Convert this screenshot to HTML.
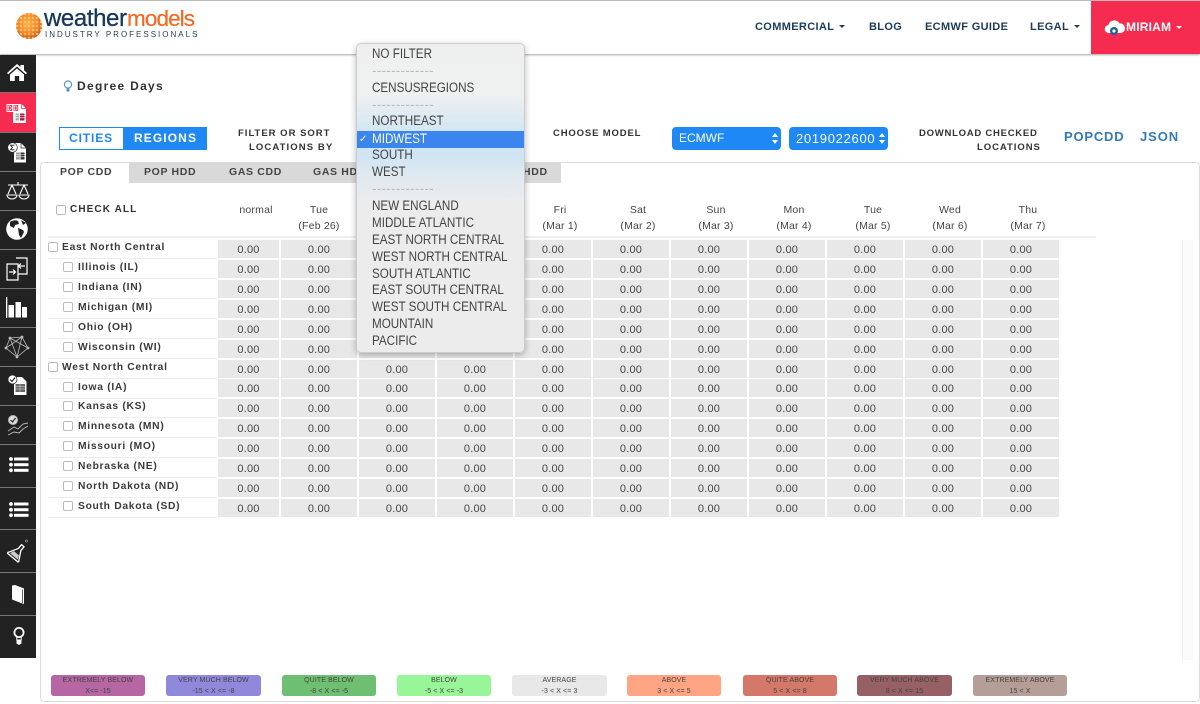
<!DOCTYPE html>
<html><head><meta charset="utf-8"><title>Degree Days</title>
<style>
html,body{margin:0;padding:0;background:#fff}
body{position:relative;width:1200px;height:704px;overflow:hidden;font-family:"Liberation Sans",sans-serif;color:#333;filter:blur(.3px)}
.a{position:absolute}
.t{position:absolute;white-space:nowrap}
.b{font-weight:bold;letter-spacing:.7px;font-size:10px;color:#333;line-height:14px}
.nav{font-weight:bold;font-size:11px;letter-spacing:.35px;color:#1d3c5c;line-height:14px;top:20px}
.caret{display:inline-block;width:0;height:0;border-left:3px solid transparent;border-right:3px solid transparent;border-top:3px solid currentColor;vertical-align:2px;margin-left:2px}
.side{position:absolute;left:0;width:36px;background:#222}
.sep{position:absolute;left:0;width:36px;height:1px;background:#777}
.tab{position:absolute;top:165px;font-weight:bold;font-size:10.5px;letter-spacing:.65px;color:#444;line-height:14px;white-space:nowrap}
.hd{position:absolute;top:202px;text-align:center;font-size:10.5px;line-height:16px;color:#444;width:80px;letter-spacing:.2px}
.r{position:absolute;left:0;height:18px;width:1100px}
.r span{position:absolute;top:0;height:18px;background:#e8e8e8;text-align:center;font-size:11px;line-height:20px;color:#444;letter-spacing:.2px}
.r span:nth-child(1){left:218px;width:61px}
.r span:nth-child(2){left:281px;width:76px}
.r span:nth-child(3){left:359px;width:76px}
.r span:nth-child(4){left:437px;width:76px}
.r span:nth-child(5){left:515px;width:76px}
.r span:nth-child(6){left:593px;width:76px}
.r span:nth-child(7){left:671px;width:76px}
.r span:nth-child(8){left:749px;width:76px}
.r span:nth-child(9){left:827px;width:76px}
.r span:nth-child(10){left:905px;width:76px}
.r span:nth-child(11){left:983px;width:76px}
.l{position:absolute;left:48px;width:168px;height:18px;border-bottom:1px solid #eee}
.l i{position:absolute;width:8px;height:8px;border:1px solid #bbb;border-radius:2px;background:#fff;top:2px}
.l b{position:absolute;top:1px;font-size:10.3px;letter-spacing:.7px;line-height:14px;color:#3a3a3a;white-space:nowrap}
.p i{left:0}.p b{left:14px}
.k i{left:15px}.k b{left:30px}
.dd{position:absolute;left:356px;top:43px;width:169px;height:310px;border-radius:5px;border:1px solid #ccc;box-shadow:0 2px 7px rgba(0,0,0,.28);z-index:5;background:linear-gradient(#efefef 0,#eff0f0 50px,#d9e9f3 78px,#cfe5f3 92px,#cfe5f3 112px,#dfe9f0 130px,#ececec 160px,#ececec 100%);font-size:13.4px;color:#444;box-sizing:border-box}
.dd div{position:absolute;left:15px;height:17px;line-height:17px;white-space:nowrap;transform:scaleX(.87);transform-origin:0 0}
.dd .s{color:#bbb;letter-spacing:.3px;transform:none}
.lg{position:absolute;top:675px;height:20px;padding-top:1px;border-radius:3px;text-align:center;font-size:7px;line-height:10.5px;color:#444;letter-spacing:.1px}
.sel{position:absolute;top:127px;height:23px;background:#1e88f5;border-radius:4px;color:#fff;font-size:13px;line-height:23px;letter-spacing:.7px}
.ar{position:absolute;top:6px;width:0;height:0;border-left:3px solid transparent;border-right:3px solid transparent}
</style></head><body>

<!-- header -->
<div class="a" style="left:0;top:0;width:1200px;height:54px;background:#fff;border-top:1px solid #bbb;box-sizing:border-box;box-shadow:0 1px 2px rgba(0,0,0,.35)"></div>
<svg class="a" style="left:15px;top:12px" width="28" height="28" viewBox="0 0 28 28">
<defs><radialGradient id="g" cx=".45" cy=".4" r=".65"><stop offset="0" stop-color="#ffb347"/><stop offset=".6" stop-color="#f58a2a"/><stop offset="1" stop-color="#c9541a"/></radialGradient>
<pattern id="h" width="4" height="4" patternUnits="userSpaceOnUse"><circle cx="2" cy="2" r="1.1" fill="#ffd38a" opacity=".8"/></pattern></defs>
<circle cx="14" cy="14" r="13" fill="url(#g)"/><circle cx="14" cy="14" r="13" fill="url(#h)"/>
</svg>
<div class="t" style="left:44px;top:5px;font-size:24px;line-height:28px;letter-spacing:-.4px;color:#16365a;-webkit-text-stroke:.3px #16365a">weather</div>
<div class="t" style="left:127px;top:5px;font-size:22.5px;line-height:28px;letter-spacing:-.9px;color:#f26a21;-webkit-text-stroke:.2px #f26a21">models</div>
<div class="t" style="left:45px;top:30px;font-size:8px;line-height:10px;letter-spacing:2px;color:#1e3d5e">INDUSTRY PROFESSIONALS</div>

<div class="t nav" style="left:755px">COMMERCIAL <span class="caret"></span></div>
<div class="t nav" style="left:869px">BLOG</div>
<div class="t nav" style="left:925px">ECMWF GUIDE</div>
<div class="t nav" style="left:1030px">LEGAL <span class="caret"></span></div>
<div class="a" style="left:1091px;top:1px;width:109px;height:53px;background:#f52b4f"></div>
<svg class="a" style="left:1104px;top:18px" width="22" height="18" viewBox="0 0 22 18"><path d="M5 15a4 4 0 0 1-.6-8A6 6 0 0 1 15.500 5.500 4.800 4.800 0 0 1 17 15z" fill="#fff"/><circle cx="10" cy="13" r="4" fill="#1f5f96"/><circle cx="10" cy="13" r="1.600" fill="#fff"/></svg>
<div class="t nav" style="left:1126px;color:#fff;font-size:12px;letter-spacing:.2px">MIRIAM <span class="caret" style="margin-left:1px"></span></div>

<!-- sidebar -->
<div class="side" style="top:55px;height:603px"></div>
<div class="a" style="left:0;top:93px;width:36px;height:39px;background:#f52b4f"></div>
<div class="sep" style="top:92px"></div><div class="sep" style="top:132px"></div><div class="sep" style="top:171px"></div><div class="sep" style="top:210px"></div><div class="sep" style="top:249px"></div><div class="sep" style="top:288px"></div><div class="sep" style="top:327px"></div><div class="sep" style="top:366px"></div><div class="sep" style="top:405px"></div><div class="sep" style="top:444px"></div><div class="sep" style="top:487px"></div><div class="sep" style="top:529px"></div><div class="sep" style="top:572px"></div><div class="sep" style="top:615px"></div>

<svg class="a" style="left:0;top:55px" width="36" height="603" viewBox="0 0 36 603" fill="none">
<!-- home -->
<path d="M7 18 17 9l3.500 3v-2H24v5.200l3 2.800-1.200 1.300L17 11.500 8.200 19.300z" fill="#fff"/><path d="M10 19.500 17 13.500l7 6V26h-4.800v-5h-4.400v5H10z" fill="#fff"/>
<!-- DD doc -->
<g transform="translate(0,39)">
<path d="M19 10h2.500l4.500 4.500V29H13V18h6z" fill="#fff"/><path d="M21.500 10v4.500H26" stroke="#f52b4f" stroke-width=".7"/>
<rect x="7" y="10.500" width="5.600" height="7" stroke="#fff" stroke-width="1"/><rect x="13" y="10.500" width="5.600" height="7" stroke="#fff" stroke-width="1"/>
<path d="M8.500 12v4h1.500l1-1v-2l-1-1zM14.500 12v4H16l1-1v-2l-1-1z" stroke="#fff" stroke-width=".7"/>
<path d="M15.500 19.500h3.500v7h-3.500z" fill="#aaa"/><path d="M20 19.500h4.500v7H20z" fill="#a51d38"/><path d="M15.500 21.500h9M15.500 23.800h9" stroke="#fff" stroke-width=".6"/>
</g>
<!-- sum doc -->
<g transform="translate(0,78)">
<path d="M15 10h6l5 5v14.500H14V17z" fill="#fff"/><path d="M21 10v5h5" stroke="#222" stroke-width=".7"/><circle cx="12.500" cy="14.500" r="4.800" fill="#fff" stroke="#222" stroke-width=".7"/><path d="M14.500 12.200h-4l2 2.300-2 2.300h4" stroke="#222" stroke-width=".9"/>
<path d="M16 19.500h3.800v7H16z" fill="#999"/><path d="M20.500 19.500h4v7h-4z" fill="#333"/><path d="M16 21.500h8.500M16 23.800h8.500" stroke="#fff" stroke-width=".6"/>
</g>
<!-- scales -->
<g transform="translate(0,117)" stroke="#fff" stroke-width="1.100">
<path d="M8 13h20M18 10v3M12 13 8 22M12 13l4 9M24 13l-4 9M24 13l4 9"/><path d="M7 23h10a5 4 0 0 1-10 0zM19 23h10a5 4 0 0 1-10 0z"/>
</g>
<!-- globe -->
<g transform="translate(0,156)">
<circle cx="17" cy="18" r="10.800" fill="#fff"/><path d="M10 11c3-2 6-2 8-1l1 3-4 1-1 3-4-2zM18 17l5 2 1 2-3 6-2-3zM21 9l5 3-3 2z" fill="#222"/>
</g>
<!-- arrows -->
<g transform="translate(0,195)" stroke="#fff" stroke-width="1.200">
<path d="M7 14h11v16H7zM16 8h11v16h-9"/><path d="M9 22h6m-2-2.500 2.500 2.500-2.500 2.500M25 16h-6m2-2.500L18.500 16l2.500 2.500"/>
</g>
<!-- bars -->
<g transform="translate(0,234)" fill="#fff">
<rect x="6" y="8" width="1.300" height="21"/><rect x="8.500" y="16" width="5.500" height="12.500"/><rect x="15.500" y="13" width="5.500" height="15.500"/><rect x="22" y="18" width="5" height="10.500"/>
</g>
<!-- network -->
<g transform="translate(0,273)" stroke="#bbb" stroke-width=".8">
<path d="M10 10 22 9 28 20 17 29 6 20zM10 10 17 29M22 9 17 29M6 20 22 9M28 20 10 10"/><g fill="#bbb"><circle cx="10" cy="10" r="1"/><circle cx="22" cy="9" r="1"/><circle cx="28" cy="20" r="1"/><circle cx="17" cy="29" r="1"/><circle cx="6" cy="20" r="1"/></g>
</g>
<!-- check doc -->
<g transform="translate(0,312)">
<path d="M15 10h7l4.500 4.500V28H14V16z" fill="#fff"/><circle cx="12.500" cy="12.500" r="4.500" fill="#fff" stroke="#222" stroke-width=".7"/><path d="m10 12.500 2 2 3-4" stroke="#222" stroke-width="1.100"/><path d="M15.500 17h9.500v8h-9.500z" fill="#666"/><path d="M15.500 19.500h9.500M15.500 22h9.500M20 17v8" stroke="#ddd" stroke-width=".5"/>
</g>
<!-- chart check -->
<g transform="translate(0,351)" stroke="#bbb" stroke-width=".9">
<circle cx="13" cy="14" r="4.500" fill="#ddd"/><path d="m10.500 14 2 2 3-4" stroke="#222" stroke-width="1.100"/><path d="M8 25l6-4 4 2 5-5 5-1M8 29l6-3 5 1 4-4 5-3"/>
</g>
<!-- lists -->
<g transform="translate(0,390)" fill="#fff">
<circle cx="11" cy="14" r="1.900"/><circle cx="11" cy="19.700" r="1.900"/><circle cx="11" cy="25.300" r="1.900"/><rect x="14" y="12.500" width="14.500" height="3"/><rect x="14" y="18.200" width="14.500" height="3"/><rect x="14" y="23.800" width="14.500" height="3"/>
</g>
<g transform="translate(0,436)" fill="#fff">
<circle cx="11" cy="13" r="1.900"/><circle cx="11" cy="18.700" r="1.900"/><circle cx="11" cy="24.300" r="1.900"/><rect x="14" y="11.500" width="14.500" height="3"/><rect x="14" y="17.200" width="14.500" height="3"/><rect x="14" y="22.800" width="14.500" height="3"/>
</g>
<!-- flask -->
<g transform="translate(0,476)">
<g transform="translate(17.500,21) rotate(40) scale(.82)"><path d="M-2-10h4v6l6 11a1 1 0 0 1-1 2H-7a1 1 0 0 1-1-2l6-11z" stroke="#fff" stroke-width="1.600" stroke-linejoin="round"/><path d="M-4 2h8l2 5H-6z" fill="#ccc"/></g><circle cx="26.500" cy="10" r="1.100" stroke="#aaa" stroke-width=".6"/>
</g>
<!-- book -->
<g transform="translate(0,518)">
<path d="M12 12.500 15 12 24 15.500v15.500l-3-1L12 26.500z" fill="#fff"/><path d="M22.500 16.500V30" stroke="#222" stroke-width=".7"/>
</g>
<!-- bulb -->
<g transform="translate(0,561)">
<circle cx="19" cy="16.500" r="4.600" stroke="#fff" stroke-width="1.800"/><path d="M16.800 21h4.400v3h-4.400z" stroke="#fff" stroke-width="1"/><path d="M16.500 24h5v3.500L19 29l-2.500-1.500z" fill="#fff"/>
</g>
</svg>

<!-- title row -->
<svg class="a" style="left:63px;top:80px" width="10" height="13" viewBox="0 0 10 13" fill="none"><circle cx="5" cy="4.500" r="3.600" stroke="#4d94c8" stroke-width="1.100"/><path d="M3.500 8.500h3v3h-3z" fill="#4d94c8"/></svg>
<div class="t b" style="left:77px;top:79px;font-size:12px;letter-spacing:1.3px;color:#333">Degree Days</div>

<div class="a" style="left:59px;top:127px;width:148px;height:23px;border:1px solid #1e88f5;box-sizing:border-box"></div>
<div class="a" style="left:123px;top:127px;width:84px;height:23px;background:#1e88f5"></div>
<div class="t" style="left:69px;top:131px;font-size:12px;font-weight:bold;letter-spacing:.9px;line-height:15px;color:#1e88f5">CITIES</div>
<div class="t" style="left:134px;top:131px;font-size:12px;font-weight:bold;letter-spacing:1.1px;line-height:15px;color:#fff">REGIONS</div>

<div class="t b" style="left:238px;top:127px;font-size:9.500px;letter-spacing:1px">FILTER OR SORT</div>
<div class="t b" style="left:249px;top:141px;font-size:9.500px;letter-spacing:1.1px">LOCATIONS BY</div>
<div class="t b" style="left:553px;top:127px;font-size:9.500px;letter-spacing:.85px">CHOOSE MODEL</div>

<div class="sel" style="left:672px;width:109px"><span style="position:absolute;left:7px;font-size:12px;letter-spacing:0">ECMWF</span><i class="ar" style="left:100px;border-bottom:4px solid #fff"></i><i class="ar" style="left:100px;top:13px;border-top:4px solid #fff"></i></div>
<div class="sel" style="left:789px;width:99px"><span style="position:absolute;left:7px">2019022600</span><i class="ar" style="left:90px;border-bottom:4px solid #fff"></i><i class="ar" style="left:90px;top:13px;border-top:4px solid #fff"></i></div>

<div class="t b" style="left:919px;top:127px;font-size:9.500px;letter-spacing:.75px">DOWNLOAD CHECKED</div>
<div class="t b" style="left:977px;top:141px;font-size:9.500px;letter-spacing:.95px">LOCATIONS</div>
<div class="t" style="left:1064px;top:129px;font-size:13px;font-weight:bold;letter-spacing:.8px;line-height:16px;color:#337ab7">POPCDD</div>
<div class="t" style="left:1140px;top:129px;font-size:13px;font-weight:bold;letter-spacing:.9px;line-height:16px;color:#337ab7">JSON</div>

<!-- panel -->
<div class="a" style="left:40px;top:162px;width:1160px;height:540px;border:1px solid #ddd;border-radius:4px;box-sizing:border-box"></div>
<div class="a" style="left:129px;top:163px;width:432px;height:20px;background:#d9d9d9"></div>
<div class="tab" style="left:60px">POP CDD</div>
<div class="tab" style="left:144px">POP HDD</div>
<div class="tab" style="left:229px">GAS CDD</div>
<div class="tab" style="left:313px">GAS HDD</div>
<div class="tab" style="left:523px">HDD</div>

<i class="a" style="left:56px;top:205px;width:8px;height:8px;border:1px solid #bbb;border-radius:2px"></i>
<div class="t b" style="left:70px;top:203px;letter-spacing:1.1px">CHECK ALL</div>

<div class="hd" style="left:216px">normal</div>
<div class="hd" style="left:279px">Tue<br>(Feb 26)</div>
<div class="hd" style="left:520px">Fri<br>(Mar 1)</div>
<div class="hd" style="left:598px">Sat<br>(Mar 2)</div>
<div class="hd" style="left:676px">Sun<br>(Mar 3)</div>
<div class="hd" style="left:754px">Mon<br>(Mar 4)</div>
<div class="hd" style="left:833px">Tue<br>(Mar 5)</div>
<div class="hd" style="left:910px">Wed<br>(Mar 6)</div>
<div class="hd" style="left:988px">Thu<br>(Mar 7)</div>
<div class="a" style="left:48px;top:236px;width:1048px;height:2px;background:#eee"></div>
<div class="a" style="left:1182px;top:240px;width:11px;height:420px;background:#fafafa;border-left:1px solid #f0f0f0;box-sizing:border-box"></div>

<!-- labels -->
<div class="l p" style="top:240px"><i></i><b>East North Central</b></div>
<div class="l k" style="top:260px"><i></i><b>Illinois (IL)</b></div>
<div class="l k" style="top:280px"><i></i><b>Indiana (IN)</b></div>
<div class="l k" style="top:300px"><i></i><b>Michigan (MI)</b></div>
<div class="l k" style="top:320px"><i></i><b>Ohio (OH)</b></div>
<div class="l k" style="top:340px"><i></i><b>Wisconsin (WI)</b></div>
<div class="l p" style="top:360px"><i></i><b>West North Central</b></div>
<div class="l k" style="top:380px"><i></i><b>Iowa (IA)</b></div>
<div class="l k" style="top:399px"><i></i><b>Kansas (KS)</b></div>
<div class="l k" style="top:419px"><i></i><b>Minnesota (MN)</b></div>
<div class="l k" style="top:439px"><i></i><b>Missouri (MO)</b></div>
<div class="l k" style="top:459px"><i></i><b>Nebraska (NE)</b></div>
<div class="l k" style="top:479px"><i></i><b>North Dakota (ND)</b></div>
<div class="l k" style="top:499px"><i></i><b>South Dakota (SD)</b></div>

<!-- data -->
<div class="r" style="top:240px"><span>0.00</span><span>0.00</span><span>0.00</span><span>0.00</span><span>0.00</span><span>0.00</span><span>0.00</span><span>0.00</span><span>0.00</span><span>0.00</span><span>0.00</span></div>
<div class="r" style="top:260px"><span>0.00</span><span>0.00</span><span>0.00</span><span>0.00</span><span>0.00</span><span>0.00</span><span>0.00</span><span>0.00</span><span>0.00</span><span>0.00</span><span>0.00</span></div>
<div class="r" style="top:280px"><span>0.00</span><span>0.00</span><span>0.00</span><span>0.00</span><span>0.00</span><span>0.00</span><span>0.00</span><span>0.00</span><span>0.00</span><span>0.00</span><span>0.00</span></div>
<div class="r" style="top:300px"><span>0.00</span><span>0.00</span><span>0.00</span><span>0.00</span><span>0.00</span><span>0.00</span><span>0.00</span><span>0.00</span><span>0.00</span><span>0.00</span><span>0.00</span></div>
<div class="r" style="top:320px"><span>0.00</span><span>0.00</span><span>0.00</span><span>0.00</span><span>0.00</span><span>0.00</span><span>0.00</span><span>0.00</span><span>0.00</span><span>0.00</span><span>0.00</span></div>
<div class="r" style="top:340px"><span>0.00</span><span>0.00</span><span>0.00</span><span>0.00</span><span>0.00</span><span>0.00</span><span>0.00</span><span>0.00</span><span>0.00</span><span>0.00</span><span>0.00</span></div>
<div class="r" style="top:360px"><span>0.00</span><span>0.00</span><span>0.00</span><span>0.00</span><span>0.00</span><span>0.00</span><span>0.00</span><span>0.00</span><span>0.00</span><span>0.00</span><span>0.00</span></div>
<div class="r" style="top:379px"><span>0.00</span><span>0.00</span><span>0.00</span><span>0.00</span><span>0.00</span><span>0.00</span><span>0.00</span><span>0.00</span><span>0.00</span><span>0.00</span><span>0.00</span></div>
<div class="r" style="top:399px"><span>0.00</span><span>0.00</span><span>0.00</span><span>0.00</span><span>0.00</span><span>0.00</span><span>0.00</span><span>0.00</span><span>0.00</span><span>0.00</span><span>0.00</span></div>
<div class="r" style="top:419px"><span>0.00</span><span>0.00</span><span>0.00</span><span>0.00</span><span>0.00</span><span>0.00</span><span>0.00</span><span>0.00</span><span>0.00</span><span>0.00</span><span>0.00</span></div>
<div class="r" style="top:439px"><span>0.00</span><span>0.00</span><span>0.00</span><span>0.00</span><span>0.00</span><span>0.00</span><span>0.00</span><span>0.00</span><span>0.00</span><span>0.00</span><span>0.00</span></div>
<div class="r" style="top:459px"><span>0.00</span><span>0.00</span><span>0.00</span><span>0.00</span><span>0.00</span><span>0.00</span><span>0.00</span><span>0.00</span><span>0.00</span><span>0.00</span><span>0.00</span></div>
<div class="r" style="top:479px"><span>0.00</span><span>0.00</span><span>0.00</span><span>0.00</span><span>0.00</span><span>0.00</span><span>0.00</span><span>0.00</span><span>0.00</span><span>0.00</span><span>0.00</span></div>
<div class="r" style="top:499px"><span>0.00</span><span>0.00</span><span>0.00</span><span>0.00</span><span>0.00</span><span>0.00</span><span>0.00</span><span>0.00</span><span>0.00</span><span>0.00</span><span>0.00</span></div>

<!-- dropdown -->
<div class="dd">
<div style="top:1px">NO FILTER</div>
<div class="s" style="top:18px">-------------</div>
<div style="top:35px">CENSUSREGIONS</div>
<div class="s" style="top:52px">-------------</div>
<div style="top:68px">NORTHEAST</div>
<div style="left:0;top:87px;width:167px;height:17px;background:#3a85ee;transform:none"></div>
<div style="top:86px;color:#fff">MIDWEST</div>
<div style="left:2px;top:87px;color:#fff;font-size:10px;transform:none">&#10003;</div>
<div style="top:102px">SOUTH</div>
<div style="top:119px">WEST</div>
<div class="s" style="top:136px">-------------</div>
<div style="top:153px">NEW ENGLAND</div>
<div style="top:170px">MIDDLE ATLANTIC</div>
<div style="top:187px">EAST NORTH CENTRAL</div>
<div style="top:204px">WEST NORTH CENTRAL</div>
<div style="top:221px">SOUTH ATLANTIC</div>
<div style="top:237px">EAST SOUTH CENTRAL</div>
<div style="top:254px">WEST SOUTH CENTRAL</div>
<div style="top:271px">MOUNTAIN</div>
<div style="top:288px">PACIFIC</div>
</div>

<!-- legend -->
<div class="lg" style="left:51px;width:94px;background:#b566a3">EXTREMELY BELOW<br>X&lt;= -15</div>
<div class="lg" style="left:166px;width:95px;background:#9088db">VERY MUCH BELOW<br>-15 &lt; X &lt;= -8</div>
<div class="lg" style="left:282px;width:94px;background:#6fbf72">QUITE BELOW<br>-8 &lt; X &lt;= -5</div>
<div class="lg" style="left:397px;width:94px;background:#98f598">BELOW<br>-5 &lt; X &lt;= -3</div>
<div class="lg" style="left:512px;width:95px;background:#e8e8e8">AVERAGE<br>-3 &lt; X &lt;= 3</div>
<div class="lg" style="left:627px;width:94px;background:#ffa583">ABOVE<br>3 &lt; X &lt;= 5</div>
<div class="lg" style="left:743px;width:94px;background:#d4786a">QUITE ABOVE<br>5 &lt; X &lt;= 8</div>
<div class="lg" style="left:857px;width:95px;background:#966065">VERY MUCH ABOVE<br>8 &lt; X &lt;= 15</div>
<div class="lg" style="left:973px;width:94px;background:#b59e98">EXTREMELY ABOVE<br>15 &lt; X</div>
</body></html>
